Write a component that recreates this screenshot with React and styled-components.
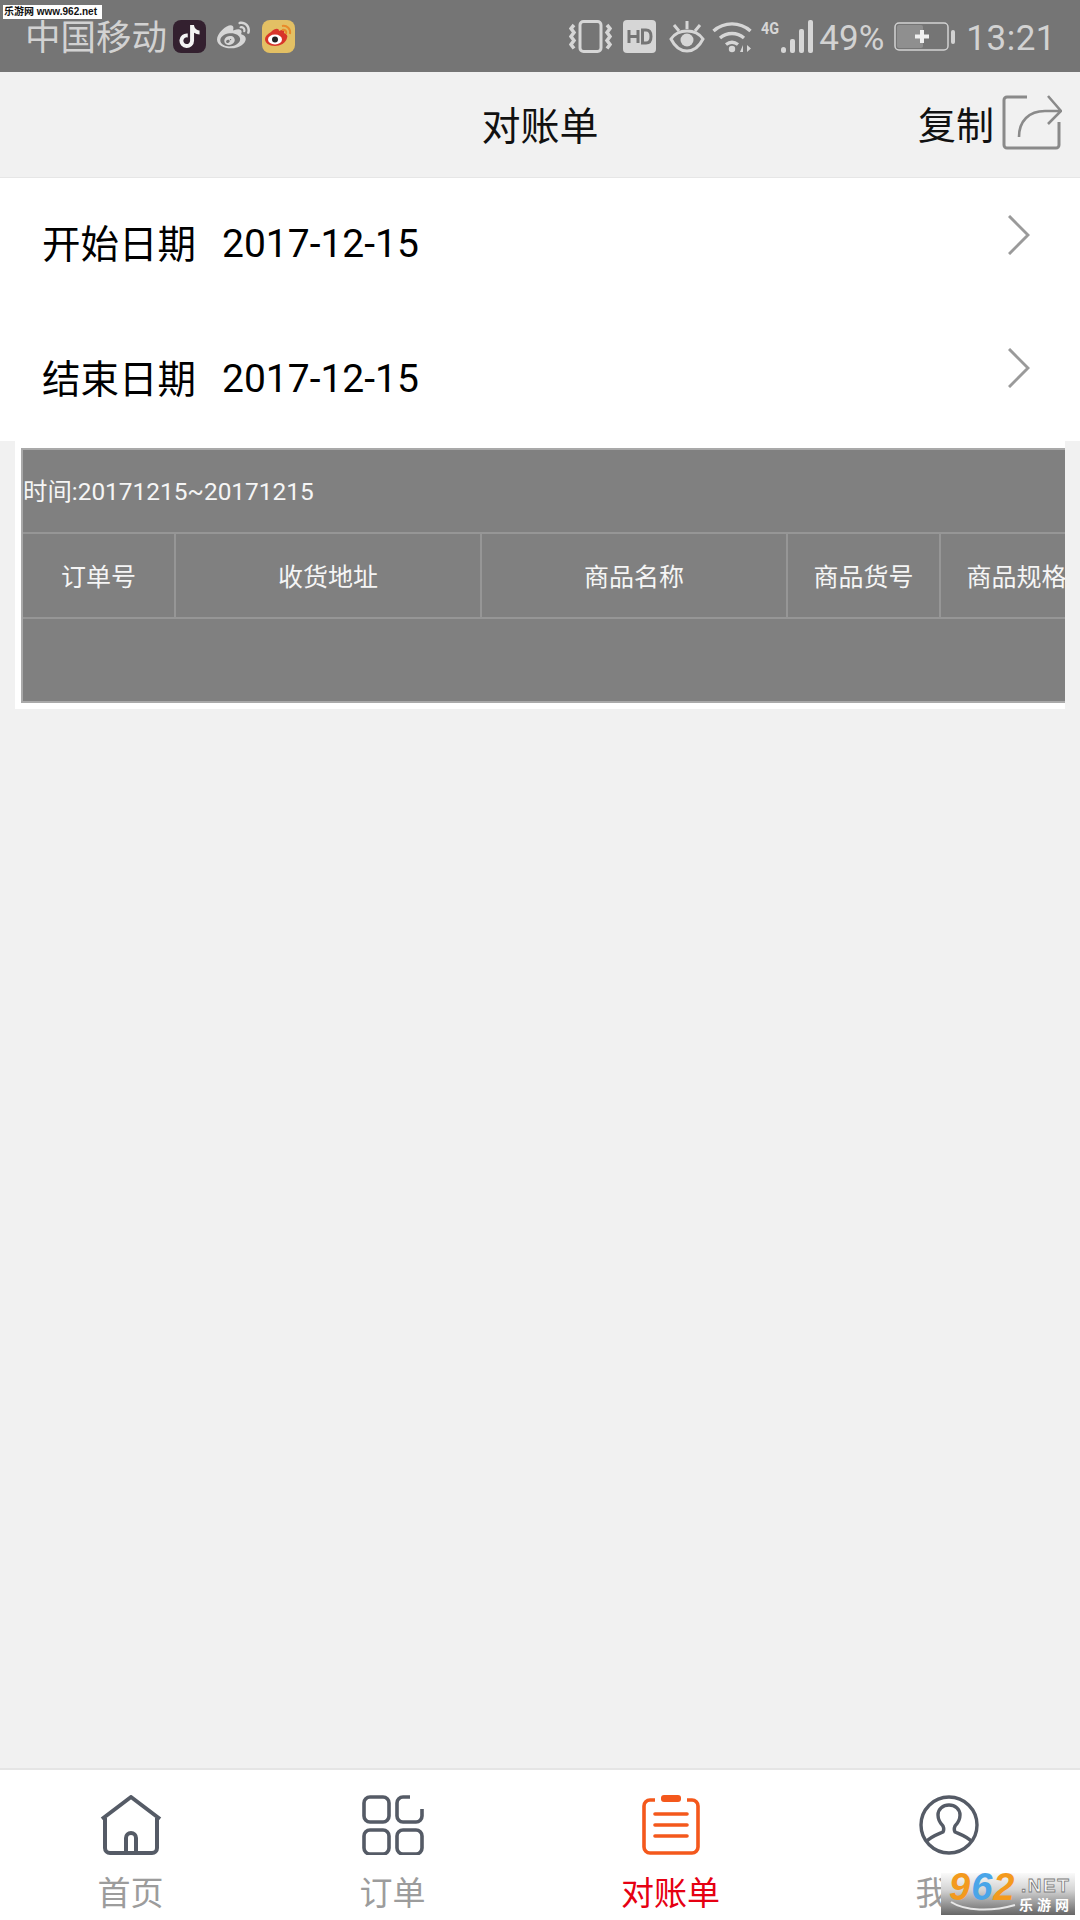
import React from 'react';
import styled, { createGlobalStyle } from 'styled-components';
import { FaWeibo, FaTiktok } from 'react-icons/fa';

const GlobalStyle = createGlobalStyle`
  html, body {
    margin: 0;
    padding: 0;
    background: #f1f1f1;
  }
  * {
    box-sizing: border-box;
  }
`;

const FONT = '"Roboto", "Noto Sans CJK SC", sans-serif';

const Page = styled.div`
  position: relative;
  display: flex;
  flex-direction: column;
  width: 1080px;
  height: 1920px;
  overflow: hidden;
  background: #f1f1f1;
  font-family: ${FONT};
`;

const StatusBar = styled.div`
  display: flex;
  align-items: center;
  justify-content: space-between;
  height: 72px;
  padding: 0 24px 0 25px;
  background: #757575;
  color: #d2d2d2;
`;

const StatusGroup = styled.div`
  display: flex;
  align-items: center;
`;

const Carrier = styled.span`
  font-size: 35.500px;
  line-height: 72px;
  margin: 4px 6px 0 0;
`;

const AppBadge = styled.div`
  display: flex;
  align-items: center;
  justify-content: center;
  width: 33px;
  height: 33px;
  margin-right: ${props => props.gap || 0}px;
  border-radius: 8px;
  background: ${props => props.bg || 'transparent'};
`;

const StatusIcon = styled.span`
  display: flex;
  margin-right: ${props => props.gap || 0}px;
`;

const StatusText = styled.span`
  font-size: 35px;
  margin: 4px ${props => props.right || 0}px 0 ${props => props.left || 0}px;
  letter-spacing: ${props => props.spacing || 0}px;
`;

const SourceMark = styled.div`
  position: absolute;
  left: 3px;
  top: 5px;
  width: 99px;
  height: 14px;
  background: #fff;
  color: #111;
  font: bold 10px/14px "Liberation Sans", "Noto Sans CJK SC", sans-serif;
  white-space: nowrap;
  padding-left: 1px;
`;

const Header = styled.div`
  position: relative;
  display: flex;
  align-items: center;
  justify-content: center;
  height: 106px;
  padding-bottom: 4px;
  border-bottom: 1px solid #e6e6e6;
  background: #f1f1f1;
`;

const Title = styled.div`
  font-size: 39px;
  color: #111;
`;

const CopyAction = styled.div`
  position: absolute;
  right: 18px;
  top: 21px;
  display: flex;
  align-items: center;
  gap: 8px;
  font-size: 38px;
  color: #111;
`;

const CopyLabel = styled.span`
  margin-top: 2px;
`;

const DateList = styled.div`
  background: #fff;
`;

const DateRow = styled.div`
  display: flex;
  align-items: center;
  height: ${props => props.h}px;
  padding: ${props => props.pad || 0}px 50px 0 42px;
  color: #000;
  font-size: 39px;
`;

const DateLabel = styled.span`
  width: 180px;
  margin-bottom: 6px;
  font-size: 38.500px;
`;

const DateValue = styled.span`
  flex: 1;
`;

const Chevron = styled.svg`
  align-self: flex-start;
  margin-top: ${props => props.top}px;
`;

const TableCard = styled.div`
  width: 1050px;
  height: 268px;
  margin-left: 15px;
  padding: 7px 0 6px 6px;
  background: #fff;
  overflow: hidden;
`;

const Table = styled.div`
  width: 1200px;
  height: 255px;
  display: grid;
  grid-template-rows: 84px 85px 82px;
  background: #808080;
  border: 2px solid #a9a9a9;
  color: #f5f5f5;
`;

const RangeRow = styled.div`
  display: flex;
  align-items: center;
  padding: 0 0 4px 0;
  font-size: 24.400px;
  border-bottom: 2px solid #969696;
`;

const HeadRow = styled.div`
  display: grid;
  grid-template-columns: 153px 306px 306px 153px 153px;
  font-size: 25px;
  border-bottom: 2px solid #969696;
`;

const HeadCell = styled.div`
  display: flex;
  align-items: center;
  justify-content: center;
  padding-bottom: 2px;
  border-right: 2px solid #969696;
  white-space: nowrap;
`;

const EmptyRow = styled.div``;

const Spacer = styled.div`
  flex: 1;
`;

const TabBar = styled.div`
  position: relative;
  display: grid;
  grid-template-columns: 261px 263px 293px 263px;
  height: 152px;
  border-top: 2px solid #e5e5e5;
  background: #fff;
`;

const Tab = styled.div`
  display: flex;
  flex-direction: column;
  align-items: center;
  padding-top: 25px;
`;

const TabLabel = styled.span`
  margin-top: 19px;
  font-size: 33px;
  line-height: 40px;
  color: ${props => (props.active ? '#e60012' : '#9c9c9c')};
`;

const NetMark = styled.div`
  position: absolute;
  left: 941px;
  top: 103px;
  width: 134px;
  height: 42px;
  background: linear-gradient(#fafafa 0%, #d4d4d4 40%, #666 100%);
`;

const NetDigits = styled.span`
  position: absolute;
  left: 8px;
  top: 0;
  font: italic 900 38px/28px "Liberation Sans", sans-serif;
  letter-spacing: 1px;
`;

const Digit = styled.span`
  color: ${props => props.color};
`;

const NetWord = styled.span`
  position: absolute;
  left: 80px;
  top: 3px;
  color: #f8f8f8;
  font: bold 19px/20px "Liberation Sans", sans-serif;
  letter-spacing: 1.500px;
  -webkit-text-stroke: 0.800px #7a7a7a;
`;

const NetName = styled.span`
  position: absolute;
  left: 78px;
  top: 22px;
  color: #fff;
  font: bold 14px/18px "Noto Sans CJK SC", sans-serif;
  letter-spacing: 4px;
`;

const NetSwoosh = styled.svg`
  position: absolute;
  left: 8px;
  top: 27px;
`;

const VibrateIcon = () => (
  <svg width="43" height="33" viewBox="0 0 43 33" fill="none" stroke="#d6d6d6" strokeWidth="3">
    <rect x="11" y="1.500" width="21" height="30" rx="3.500" />
    <path d="M5 5l-3 3.500 3 4-3 4 3 4-3 4 3 4" strokeWidth="3.500" />
    <path d="M38 5l3 3.500-3 4 3 4-3 4 3 4-3 4" strokeWidth="3.500" />
  </svg>
);

const HdIcon = () => (
  <svg width="33" height="33" viewBox="0 0 33 33">
    <rect width="33" height="33" rx="4" fill="#d6d6d6" />
    <path d="M6 10v13M15 10v13M6 16.500h9M19.500 10v13h3.500c3.500 0 5-2.500 5-6.500s-1.500-6.500-5-6.500z" fill="none" stroke="#757575" strokeWidth="3" />
  </svg>
);

const EyeIcon = () => (
  <svg width="36" height="33" viewBox="0 0 36 33" fill="none" stroke="#d6d6d6" strokeWidth="3">
    <path d="M2 19c4-6 10-8 16-8s12 2 16 8c-4 8-10 12-16 12S6 27 2 19z" />
    <circle cx="18" cy="20" r="6.500" fill="#d6d6d6" stroke="none" />
    <path d="M18 1v8M5 5l5 6M31 5l-5 6" />
  </svg>
);

const WifiIcon = () => (
  <svg width="42" height="33" viewBox="0 0 42 33" fill="none" stroke="#d6d6d6" strokeWidth="3.400">
    <path d="M1.500 11C12 1.500 28 1.500 38.500 11M8 18c7-6 17-6 24 0M14 24.500c4-3 8-3 12 0" />
    <circle cx="20" cy="29" r="3.200" fill="#d6d6d6" stroke="none" />
    <path d="M31 25l-3 7h3zM35 25v7l4-3.500z" fill="#d6d6d6" stroke="none" />
  </svg>
);

const SignalIcon = () => (
  <svg width="54" height="35" viewBox="0 0 54 35" fill="#d6d6d6">
    <text x="0" y="15" fontSize="17" fontWeight="700" fontFamily="Roboto, sans-serif" textLength="18" lengthAdjust="spacingAndGlyphs">4G</text>
    <rect x="20" y="28" width="5" height="6" rx="2.500" />
    <rect x="29" y="20" width="5" height="14" rx="2" />
    <rect x="38" y="10" width="5" height="24" rx="2" />
    <rect x="47" y="1" width="5" height="33" rx="2" />
  </svg>
);

const BatteryIcon = () => (
  <svg width="61" height="29" viewBox="0 0 61 29" fill="none">
    <rect x="1" y="1" width="53" height="27" rx="4" stroke="#d2d2d2" strokeWidth="1.500" />
    <rect x="3" y="3" width="26" height="23" rx="2" fill="#a0a0a0" opacity="0.6" />
    <rect x="57" y="8" width="4" height="14" rx="2" fill="#d2d2d2" />
    <path d="M21 14.500h14M28 8v13" stroke="#f0f0f0" strokeWidth="4" />
  </svg>
);

const WeiboAppIcon = () => (
  <svg width="33" height="33" viewBox="0 0 33 33">
    <path d="M9 12c4-4 8-4 8-1 4-2 6-1 5 2 3 1 4 3 3 5-1 5-7 8-12 8-6 0-10-3-10-7 0-2 2-5 6-7z" fill="#d8352a" />
    <ellipse cx="13" cy="19.500" rx="7" ry="5" fill="#fff" />
    <circle cx="13" cy="19.500" r="3" fill="#222" />
    <path d="M20 6c5-1 9 3 8 8M20 10c3-1 5 1 4 4" fill="none" stroke="#e88a2a" strokeWidth="2" />
  </svg>
);

const ShareIcon = () => (
  <svg width="60" height="56" viewBox="0 0 60 56" fill="none" stroke="#8a8a8a" strokeWidth="2.600">
    <path d="M25 3H5a3 3 0 0 0-3 3v45a3 3 0 0 0 3 3h49a3 3 0 0 0 3-3V28" strokeWidth="3" />
    <path d="M17 43c0-16 10-26 26-26h15M46 2l13 15-13 13" />
  </svg>
);

const HomeIcon = () => (
  <svg width="62" height="60" viewBox="0 0 62 60" fill="none" stroke="#555b66" strokeWidth="4" strokeLinejoin="round">
    <path d="M2 24L31 2l29 22M5 23v30a5 5 0 0 0 5 5h42a5 5 0 0 0 5-5V23" />
    <path d="M26 58V43a5 5 0 0 1 10 0v15" />
  </svg>
);

const GridIcon = () => (
  <svg width="62" height="60" viewBox="0 0 62 60" fill="none" stroke="#555b66" strokeWidth="3.600">
    <rect x="2" y="2" width="25" height="25" rx="6" />
    <path d="M48 2H41a6 6 0 0 0-6 6v13a6 6 0 0 0 6 6h13a6 6 0 0 0 6-6v-7" />
    <rect x="2" y="35" width="25" height="24" rx="6" />
    <rect x="35" y="35" width="25" height="24" rx="6" />
  </svg>
);

const OrdersIcon = () => (
  <svg width="58" height="60" viewBox="0 0 58 60" fill="none" stroke="#f4581c" strokeWidth="3.600">
    <path d="M13 5H8a6 6 0 0 0-6 6v41a6 6 0 0 0 6 6h42a6 6 0 0 0 6-6V11a6 6 0 0 0-6-6h-5" />
    <rect x="19" y="0" width="20" height="7" rx="3" fill="#f4581c" stroke="none" />
    <path d="M13 19h32M13 30h32M13 41h32" strokeLinecap="round" />
  </svg>
);

const UserIcon = () => (
  <svg width="62" height="60" viewBox="0 0 62 60" fill="none" stroke="#555b66" strokeWidth="3.400">
    <circle cx="31" cy="30" r="28" />
    <path d="M8 47c4-5 10-7 17-10 1-2 1-4 0-6-3-3-5-7-5-11 0-6 5-10 11-10s11 4 11 10c0 4-2 8-5 11-1 2-1 4 0 6 7 3 13 5 17 10" />
  </svg>
);

const columns = ['订单号', '收货地址', '商品名称', '商品货号', '商品规格'];

const tabs = [
  { label: '首页', icon: <HomeIcon /> },
  { label: '订单', icon: <GridIcon /> },
  { label: '对账单', icon: <OrdersIcon />, active: true },
  { label: '我的', icon: <UserIcon /> },
];

const renderChevron = top => (
  <Chevron top={top} width="22" height="40" viewBox="0 0 22 40" fill="none" stroke="#9a9a9a" strokeWidth="3">
    <path d="M1 1l19 19L1 39" />
  </Chevron>
);

const App = () => (
  <Page>
    <GlobalStyle />
    <StatusBar>
      <StatusGroup>
        <Carrier>中国移动</Carrier>
        <AppBadge bg="#33202f" gap={11}>
          <FaTiktok size={23} color="#f4f4f4" />
        </AppBadge>
        <AppBadge gap={12}>
          <FaWeibo size={34} color="#d6d6d6" />
        </AppBadge>
        <AppBadge bg="#e3c064">
          <WeiboAppIcon />
        </AppBadge>
      </StatusGroup>
      <StatusGroup>
        <StatusIcon gap={11}><VibrateIcon /></StatusIcon>
        <StatusIcon gap={13}><HdIcon /></StatusIcon>
        <StatusIcon gap={7}><EyeIcon /></StatusIcon>
        <StatusIcon gap={7}><WifiIcon /></StatusIcon>
        <SignalIcon />
        <StatusText left={4} right={10}>49%</StatusText>
        <BatteryIcon />
        <StatusText left={11} spacing={0.5}>13:21</StatusText>
      </StatusGroup>
    </StatusBar>
    <SourceMark>乐游网 www.962.net</SourceMark>
    <Header>
      <Title>对账单</Title>
      <CopyAction>
        <CopyLabel>复制</CopyLabel>
        <ShareIcon />
      </CopyAction>
    </Header>
    <DateList>
      <DateRow h={131}>
        <DateLabel>开始日期</DateLabel>
        <DateValue>2017-12-15</DateValue>
        {renderChevron(37)}
      </DateRow>
      <DateRow h={132} pad={8}>
        <DateLabel>结束日期</DateLabel>
        <DateValue>2017-12-15</DateValue>
        {renderChevron(31)}
      </DateRow>
    </DateList>
    <TableCard>
      <Table>
        <RangeRow>时间:20171215~20171215</RangeRow>
        <HeadRow>
          {columns.map(name => <HeadCell key={name}>{name}</HeadCell>)}
        </HeadRow>
        <EmptyRow />
      </Table>
    </TableCard>
    <Spacer />
    <TabBar>
      {tabs.map(tab => (
        <Tab key={tab.label}>
          {tab.icon}
          <TabLabel active={tab.active}>{tab.label}</TabLabel>
        </Tab>
      ))}
      <NetMark>
        <NetDigits>
          <Digit color="#f39a1e">9</Digit>
          <Digit color="#4aa5e8">6</Digit>
          <Digit color="#f39a1e">2</Digit>
        </NetDigits>
        <NetWord>.NET</NetWord>
        <NetName>乐游网</NetName>
        <NetSwoosh width="70" height="14" viewBox="0 0 70 14" fill="none" stroke="#e8e8e8" strokeWidth="2">
          <path d="M2 2c14 9 40 10 64 3" />
        </NetSwoosh>
      </NetMark>
    </TabBar>
  </Page>
);

export default App;
